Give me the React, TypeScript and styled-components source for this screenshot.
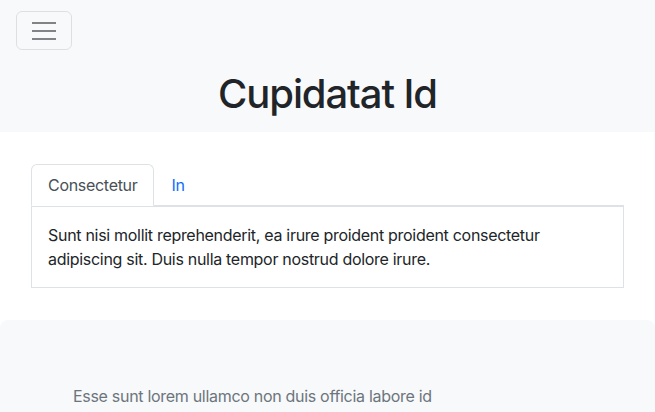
import React, { useState } from "react";
import styled, { createGlobalStyle } from "styled-components";

const Global = createGlobalStyle`
  * { box-sizing: border-box; }
  body {
    margin: 0;
    font-family: Inter, "Noto Sans", "Liberation Sans", sans-serif;
    font-size: 16px;
    line-height: 1.5;
    letter-spacing: -0.3px;
    color: #212529;
    background: #fff;
  }
`;

const Header = styled.header`
  background: #f8f9fa;
  padding: 11px 16px 10px;
`;

const Toggler = styled.button`
  display: flex;
  flex-direction: column;
  justify-content: center;
  align-items: center;
  gap: 6px;
  width: 56px;
  height: 39px;
  padding: 0;
  background: transparent;
  border: 1px solid rgba(0, 0, 0, 0.1);
  border-radius: 6px;
  cursor: pointer;
`;

const Bar = styled.span`
  display: block;
  width: 24px;
  height: 2px;
  background: #818386;
`;

const Title = styled.h1`
  margin: 20px 0 4px;
  text-align: center;
  font-size: 40px;
  font-weight: 500;
  line-height: 1.2;
  letter-spacing: -1.1px;
`;

const Main = styled.main`
  padding: 32px 31px;
`;

const Tabs = styled.ul`
  display: flex;
  list-style: none;
  margin: 0;
  padding: 0;
  border-bottom: 1px solid #dee2e6;
`;

const Tab = styled.li<{ active: boolean }>`
  margin-bottom: -1px;
  padding: 8px 16px;
  border: 1px solid transparent;
  border-color: ${(p) => (p.active ? "#dee2e6 #dee2e6 #fff" : "transparent")};
  border-radius: 6px 6px 0 0;
  background: ${(p) => (p.active ? "#fff" : "transparent")};
  color: ${(p) => (p.active ? "#495057" : "#0d6efd")};
  cursor: pointer;
`;

const Pane = styled.div`
  border: 1px solid #dee2e6;
  padding: 16px;
`;

const Footer = styled.section`
  background: #f8f9fa;
  border-radius: 8px;
  padding: 64px 73px 40px;
  color: #6c757d;
`;

const tabs = [
  {
    label: "Consectetur",
    body: "Sunt nisi mollit reprehenderit, ea irure proident proident consectetur adipiscing sit. Duis nulla tempor nostrud dolore irure.",
  },
  { label: "In", body: "Velit in aliqua." },
];

export default function App() {
  const [active, setActive] = useState(0);
  return (
    <>
      <Global />
      <Header>
        <Toggler aria-label="Toggle navigation">
          <Bar />
          <Bar />
          <Bar />
        </Toggler>
        <Title>Cupidatat Id</Title>
      </Header>
      <Main>
        <Tabs>
          {tabs.map((t, i) => (
            <Tab key={t.label} active={i === active} onClick={() => setActive(i)}>
              {t.label}
            </Tab>
          ))}
        </Tabs>
        <Pane>{tabs[active].body}</Pane>
      </Main>
      <Footer>Esse sunt lorem ullamco non duis officia labore id</Footer>
    </>
  );
}
